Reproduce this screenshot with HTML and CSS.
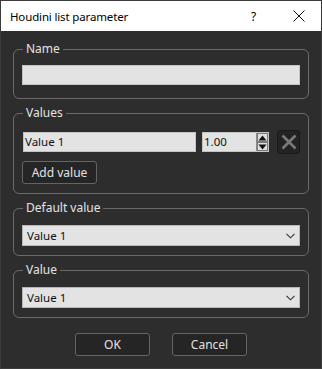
FILE: index.html
```html
<!DOCTYPE html>
<html>
<head>
<meta charset="utf-8">
<link rel="stylesheet" href="styles.css">
</head>
<body>
<div class="window">
  <div class="titlebar">
    <span class="title">Houdini list parameter</span>
    <span class="help">?</span>
    <span class="close">
      <svg width="12" height="12" viewBox="0 0 12 12"><path d="M0.5 0.5 L11.5 11.5 M11.5 0.5 L0.5 11.5" stroke="#111" stroke-width="1" fill="none"/></svg>
    </span>
  </div>
  <div class="content">
    <fieldset class="group g-name">
      <legend>Name</legend>
      <div class="lineedit name-edit"></div>
    </fieldset>

    <fieldset class="group g-values">
      <legend>Values</legend>
      <div class="value-row">
        <div class="lineedit value-edit">Value 1</div>
        <div class="spinbox">
          <span class="spin-text">1.00</span>
          <span class="spin-arrows">
            <span class="spin-btn"><svg width="9" height="6" viewBox="0 0 9 6"><path d="M0.5 5.5 L4.5 0.5 L8.5 5.5 Z" fill="#111"/></svg></span>
            <span class="spin-btn"><svg width="9" height="6" viewBox="0 0 9 6"><path d="M0.5 0.5 L4.5 5.5 L8.5 0.5 Z" fill="#111"/></svg></span>
          </span>
        </div>
        <div class="remove-btn">
          <svg width="16" height="16" viewBox="0 0 16 16"><path d="M1.5 1.5 L14.5 14.5 M14.5 1.5 L1.5 14.5" stroke="#7a7a7a" stroke-width="2.6" fill="none"/></svg>
        </div>
      </div>
      <button class="btn add-btn">Add value</button>
    </fieldset>

    <fieldset class="group g-combo">
      <legend>Default value</legend>
      <div class="combo"><span>Value 1</span>
        <svg class="chev" width="9" height="6" viewBox="0 0 9 6"><path d="M0.5 0.8 L4.5 4.8 L8.5 0.8" stroke="#333" stroke-width="1.1" fill="none"/></svg>
      </div>
    </fieldset>

    <fieldset class="group g-combo">
      <legend>Value</legend>
      <div class="combo"><span>Value 1</span>
        <svg class="chev" width="9" height="6" viewBox="0 0 9 6"><path d="M0.5 0.8 L4.5 4.8 L8.5 0.8" stroke="#333" stroke-width="1.1" fill="none"/></svg>
      </div>
    </fieldset>

    <div class="buttons">
      <button class="btn dlg-btn">OK</button>
      <button class="btn dlg-btn">Cancel</button>
    </div>
  </div>
</div>
</body>
</html>
```

FILE: styles.css
```css
* { box-sizing: border-box; }
html, body {
  margin: 0;
  padding: 0;
  background: #2d2d2d;
}
body {
  font-family: "Noto Sans", "Liberation Sans", sans-serif;
  font-size: 12px;
}
.window {
  width: 322px;
  height: 369px;
  border: 1px solid #3c3c3c;
  background: #2d2d2d;
  overflow: hidden;
}
.titlebar {
  height: 30px;
  background: #ffffff;
  display: flex;
  align-items: center;
  color: #000;
  font-size: 12px;
}
.title {
  margin-left: 9px;
  flex: 1;
  font-size: 11.5px;
  letter-spacing: -0.15px;
}
.help {
  width: 10px;
  margin-right: 32px;
  font-size: 12px;
}
.close {
  display: flex;
  margin-right: 16px;
}
.content {
  padding: 11px 12px 0 12px;
  display: flex;
  flex-direction: column;
  gap: 7px;
}
.group {
  margin: 0;
  border: 1px solid #6a6a6a;
  border-radius: 6px;
  padding: 0 8px 13px 8px;
  min-width: 0;
}
.group legend {
  margin-left: 1px;
  padding: 0 3px;
  color: #e4e4e4;
  line-height: 14px;
  font-size: 12px;
}
.lineedit {
  height: 20px;
  background: #e3e3e3;
  border: 1px solid #c4c4c4;
  color: #111;
  font-size: 11.5px;
  line-height: 18px;
  padding-left: 1px;
}
.name-edit {
  margin-top: 9px;
}
.g-values {
  padding-bottom: 9px;
}
.value-row {
  margin-top: 10px;
  height: 24px;
  display: flex;
  align-items: center;
}
.value-edit {
  width: 173px;
  margin-left: 1px;
}
.spinbox {
  margin-left: 6px;
  width: 67px;
  height: 20px;
  background: #e3e3e3;
  border: 1px solid #c4c4c4;
  display: flex;
  color: #111;
  font-size: 11.5px;
}
.spin-text {
  flex: 1;
  line-height: 18px;
  padding-left: 1px;
}
.spin-arrows {
  width: 12px;
  display: flex;
  flex-direction: column;
  background: #e3e3e3;
  border-left: 1px solid #8a8a8a;
}
.spin-btn {
  flex: 1;
  display: flex;
  align-items: center;
  justify-content: center;
  border: 1px solid #7a7a7a;
  background: #dedede;
}
.remove-btn {
  margin-left: 8px;
  width: 23px;
  height: 24px;
  background: #232323;
  border: 1px solid #1a1a1a;
  border-radius: 3px;
  display: flex;
  align-items: center;
  justify-content: center;
}
.btn {
  font-family: "Noto Sans", "Liberation Sans", sans-serif;
  font-size: 12px;
  color: #e2e2e2;
  background: #252525;
  border: 1px solid #646464;
  border-radius: 3px;
  padding: 0;
  margin: 0;
}
.add-btn {
  margin-top: 7px;
  width: 75px;
  height: 23px;
}
.g-combo {
  padding-bottom: 9px;
}
.combo {
  margin-top: 10px;
  height: 21px;
  background: #e3e3e3;
  border: 1px solid #b8b8b8;
  display: flex;
  align-items: center;
  padding-left: 4px;
  padding-right: 4px;
  color: #111;
  font-size: 11.5px;
}
.combo span {
  flex: 1;
}
.buttons {
  margin-top: 8px;
  display: flex;
  justify-content: center;
  gap: 22px;
}
.dlg-btn {
  width: 75px;
  height: 23px;
}
```
